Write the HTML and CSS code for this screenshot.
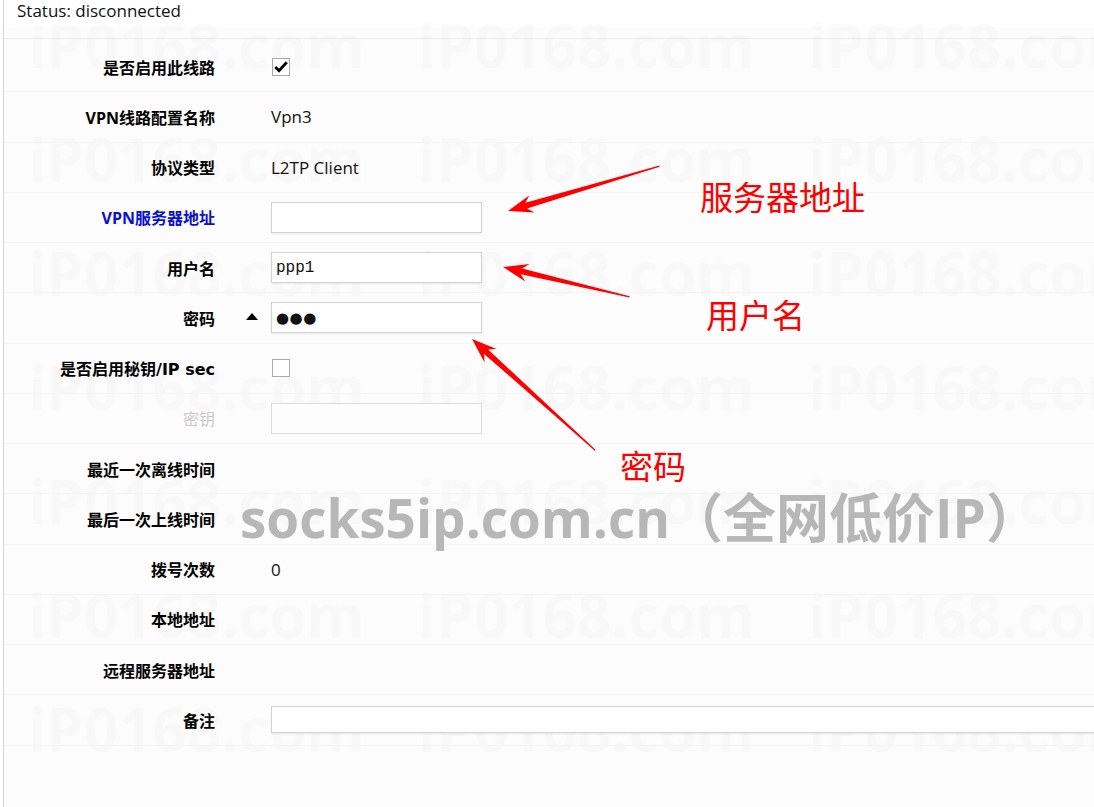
FILE: index.html
```html
<!DOCTYPE html>
<html lang="zh-CN">

<head>
    <meta charset="UTF-8">
    <meta name="viewport" content="width=device-width, initial-scale=1.0">
    <title>VPN线路配置</title>
    <link rel="stylesheet" href="styles.css">
</head>

<body>
    <div class="panel">
        <!-- faint background watermark -->
        <div class="watermark">
            <span>iP0168.com</span><span>iP0168.com</span><span>iP0168.com</span>
            <span>iP0168.com</span><span>iP0168.com</span><span>iP0168.com</span>
            <span>iP0168.com</span><span>iP0168.com</span><span>iP0168.com</span>
            <span>iP0168.com</span><span>iP0168.com</span><span>iP0168.com</span>
            <span>iP0168.com</span><span>iP0168.com</span><span>iP0168.com</span>
            <span>iP0168.com</span><span>iP0168.com</span><span>iP0168.com</span>
            <span>iP0168.com</span><span>iP0168.com</span><span>iP0168.com</span>
        </div>

        <div class="status">
            <div class="status__text">Status: disconnected</div>
        </div>

        <div class="form">
            <div class="row">
                <div class="label">是否启用此线路</div>
                <div class="aux"></div>
                <div class="value">
                    <span class="check">
                        <svg width="14" height="12" viewBox="0 0 14 12"><path d="M1.3 6 L5 9.8 L12.8 1.2" fill="none" stroke="#000" stroke-width="2.8"/></svg>
                    </span>
                </div>
            </div>
            <div class="row">
                <div class="label">VPN线路配置名称</div>
                <div class="aux"></div>
                <div class="value">Vpn3</div>
            </div>
            <div class="row">
                <div class="label">协议类型</div>
                <div class="aux"></div>
                <div class="value">L2TP Client</div>
            </div>
            <div class="row">
                <div class="label label--link">VPN服务器地址</div>
                <div class="aux"></div>
                <div class="value"><input class="field" type="text" value=""></div>
            </div>
            <div class="row">
                <div class="label">用户名</div>
                <div class="aux"></div>
                <div class="value"><input class="field field--mono" type="text" value="ppp1"></div>
            </div>
            <div class="row">
                <div class="label">密码</div>
                <div class="aux"><span class="toggle"></span></div>
                <div class="value"><input class="field field--dots" type="text" value="●●●"></div>
            </div>
            <div class="row">
                <div class="label">是否启用秘钥<span class="label__latin">/IP sec</span></div>
                <div class="aux"></div>
                <div class="value"><span class="check"></span></div>
            </div>
            <div class="row">
                <div class="label label--off">密钥</div>
                <div class="aux"></div>
                <div class="value"><input class="field field--off" type="text" value="" disabled></div>
            </div>
            <div class="row">
                <div class="label">最近一次离线时间</div>
                <div class="aux"></div>
                <div class="value"></div>
            </div>
            <div class="row">
                <div class="label">最后一次上线时间</div>
                <div class="aux"></div>
                <div class="value"></div>
            </div>
            <div class="row">
                <div class="label">拨号次数</div>
                <div class="aux"></div>
                <div class="value">0</div>
            </div>
            <div class="row">
                <div class="label">本地地址</div>
                <div class="aux"></div>
                <div class="value"></div>
            </div>
            <div class="row">
                <div class="label">远程服务器地址</div>
                <div class="aux"></div>
                <div class="value"></div>
            </div>
            <div class="row">
                <div class="label">备注</div>
                <div class="aux"></div>
                <div class="value"><input class="field field--wide" type="text" value=""></div>
            </div>
        </div>
    </div>

    <!-- annotations drawn on top of the screenshot -->
    <div class="notes">
        <svg class="notes__arrows" width="1094" height="807" viewBox="0 0 1094 807">
            <path transform="translate(508 211) rotate(163.5)" d="M0 0 L-25 -9 L-19 -3 L-158 -0.6 L-158 0.6 L-19 3 L-25 9 Z" fill="#f00"/>
            <path transform="translate(503 267) rotate(-166.7)" d="M0 0 L-25 -9 L-19 -3 L-130 -0.6 L-130 0.6 L-19 3 L-25 9 Z" fill="#f00"/>
            <path transform="translate(472 339) rotate(-137.9)" d="M0 0 L-25 -9 L-19 -3 L-166 -0.6 L-166 0.6 L-19 3 L-25 9 Z" fill="#f00"/>
        </svg>
        <span class="note note--server">服务器地址</span>
        <span class="note note--user">用户名</span>
        <span class="note note--pass">密码</span>
        <span class="stamp">socks5ip.com.cn（全网低价IP）</span>
    </div>
</body>

</html>
```

FILE: styles.css
```css
*,
*::before,
*::after {
    box-sizing: border-box;
}

body {
    margin: 0;
    background: #fff;
    font-family: "Open Sans", "Noto Sans CJK SC", sans-serif;
    font-size: 17px;
    color: #111;
    overflow: hidden;
    position: relative;
    height: 807px;
}

/* panel */
.panel {
    position: relative;
    margin-left: 3px;
    min-height: 807px;
    background: #fcfcfc;
    border-left: 1px solid #d6d6d6;
    border-top: 1px solid #d9d9d9;
}

/* watermark */
.watermark {
    position: absolute;
    top: 0;
    left: 0;
    right: 0;
    bottom: 0;
    display: grid;
    grid-template-columns: repeat(3, 390px);
    grid-auto-rows: 114px;
    padding: 14px 0 0 24px;
    font-size: 60px;
    font-weight: 700;
    line-height: 60px;
    color: rgba(0, 0, 0, 0.016);
    pointer-events: none;
    white-space: nowrap;
    overflow: hidden;
}

/* status */
.status {
    height: 39px;
    border-bottom: 1px solid #ececec;
}

.status__text {
    height: 27px;
    background: #fff;
    padding-left: 13px;
    line-height: 22px;
    margin-top: -1px;
}

/* form rows */
.form {
    position: relative;
    padding-top: 3px;
}

.row {
    display: grid;
    grid-template-columns: 211px 56px 1fr;
    align-items: center;
    height: 50.25px;
    border-bottom: 1px solid #f4f4f4;
}

.label {
    text-align: right;
    font-size: 16px;
    font-weight: 700;
    color: #000;
    white-space: nowrap;
}

.label__latin {
    font-family: "DejaVu Sans", sans-serif;
}

.label--link {
    color: #0a0fd0;
}

.label--off {
    color: #c9c9c9;
    font-weight: 400;
}

.aux {
    display: flex;
    justify-content: flex-end;
    padding-right: 13px;
}

.value {
    display: flex;
    align-items: center;
    white-space: nowrap;
}

.toggle {
    width: 0;
    height: 0;
    border-left: 6.5px solid transparent;
    border-right: 6.5px solid transparent;
    border-bottom: 7px solid #000;
    margin-top: -3px;
}

.check {
    display: flex;
    align-items: center;
    justify-content: center;
    width: 18px;
    height: 18px;
    margin-left: 1px;
    background: #fff;
    border: 1px solid #a9a9a9;
}

.field {
    width: 211px;
    height: 31px;
    margin: 0;
    padding: 0 4px;
    background: #fff;
    border: 1px solid #d3d3d3;
    border-radius: 0;
    box-shadow: 0 1px 2px rgba(0, 0, 0, 0.08);
    font-family: "Open Sans", sans-serif;
    font-size: 16px;
    color: #111;
    outline: none;
}

.field--mono {
    font-family: "Liberation Mono", monospace;
    font-size: 16px;
}

.field--dots {
    font-family: "DejaVu Sans", sans-serif;
    font-size: 15px;
    letter-spacing: 0.5px;
}

.field--off {
    background: #fdfdfd;
    border-color: #dcdcdc;
    box-shadow: none;
}

.field--wide {
    width: 840px;
    height: 27px;
}

/* annotations */
.notes {
    position: absolute;
    top: 0;
    left: 0;
    width: 1094px;
    height: 807px;
    pointer-events: none;
}

.notes__arrows {
    position: absolute;
    top: 0;
    left: 0;
}

.note {
    position: absolute;
    font-family: "Noto Sans CJK SC", sans-serif;
    font-size: 33px;
    line-height: 36px;
    font-weight: 400;
    color: #f00;
    white-space: nowrap;
}

.note--server {
    left: 700px;
    top: 178px;
}

.note--user {
    left: 706px;
    top: 296px;
}

.note--pass {
    left: 620px;
    top: 447px;
}

.stamp {
    position: absolute;
    left: 240px;
    top: 491px;
    font-family: "Open Sans", "Noto Sans CJK SC", sans-serif;
    font-size: 53px;
    line-height: 54px;
    font-weight: 700;
    color: #b7b7b7;
    white-space: nowrap;
}
```
